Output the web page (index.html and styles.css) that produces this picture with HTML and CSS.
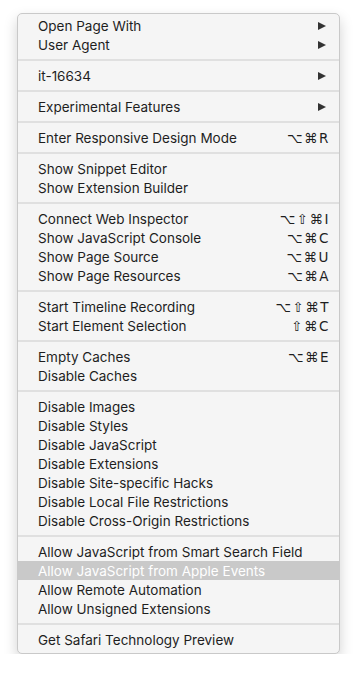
FILE: index.html
```html
<!DOCTYPE html>
<html>
<head>
<meta charset="utf-8">
<link rel="stylesheet" href="styles.css">
</head>
<body>
<div class="menu">
  <div class="group">
    <div class="item"><span>Open Page With</span><span class="arrow"></span></div>
    <div class="item"><span>User Agent</span><span class="arrow"></span></div>
  </div>
  <div class="sep"></div>
  <div class="group">
    <div class="item"><span>it-16634</span><span class="arrow"></span></div>
  </div>
  <div class="sep"></div>
  <div class="group">
    <div class="item"><span>Experimental Features</span><span class="arrow"></span></div>
  </div>
  <div class="sep"></div>
  <div class="group">
    <div class="item"><span>Enter Responsive Design Mode</span><span class="key">⌥⌘R</span></div>
  </div>
  <div class="sep"></div>
  <div class="group">
    <div class="item"><span>Show Snippet Editor</span></div>
    <div class="item"><span>Show Extension Builder</span></div>
  </div>
  <div class="sep"></div>
  <div class="group">
    <div class="item"><span>Connect Web Inspector</span><span class="key">⌥⇧⌘I</span></div>
    <div class="item"><span>Show JavaScript Console</span><span class="key">⌥⌘C</span></div>
    <div class="item"><span>Show Page Source</span><span class="key">⌥⌘U</span></div>
    <div class="item"><span>Show Page Resources</span><span class="key">⌥⌘A</span></div>
  </div>
  <div class="sep"></div>
  <div class="group">
    <div class="item"><span>Start Timeline Recording</span><span class="key">⌥⇧⌘T</span></div>
    <div class="item"><span>Start Element Selection</span><span class="key">⇧⌘C</span></div>
  </div>
  <div class="sep"></div>
  <div class="group">
    <div class="item"><span>Empty Caches</span><span class="key">⌥⌘E</span></div>
    <div class="item"><span>Disable Caches</span></div>
  </div>
  <div class="sep"></div>
  <div class="group">
    <div class="item"><span>Disable Images</span></div>
    <div class="item"><span>Disable Styles</span></div>
    <div class="item"><span>Disable JavaScript</span></div>
    <div class="item"><span>Disable Extensions</span></div>
    <div class="item"><span>Disable Site-specific Hacks</span></div>
    <div class="item"><span>Disable Local File Restrictions</span></div>
    <div class="item"><span>Disable Cross-Origin Restrictions</span></div>
  </div>
  <div class="sep"></div>
  <div class="group">
    <div class="item"><span>Allow JavaScript from Smart Search Field</span></div>
    <div class="item selected"><span>Allow JavaScript from Apple Events</span></div>
    <div class="item"><span>Allow Remote Automation</span></div>
    <div class="item"><span>Allow Unsigned Extensions</span></div>
  </div>
  <div class="sep"></div>
  <div class="group">
    <div class="item"><span>Get Safari Technology Preview</span></div>
  </div>
</div>
</body>
</html>
```
FILE: styles.css
```css
html, body {
  margin: 0;
  padding: 0;
  background: #ffffff;
}
body {
  padding: 13px 0 0 17px;
}
.menu {
  width: 321px;
  background: #f5f5f5;
  border: 1px solid #c9c9c9;
  border-radius: 5px;
  padding: 2px 0 4px;
  box-shadow: 0 6px 14px rgba(0, 0, 0, 0.18);
  font-family: Inter, "Liberation Sans", sans-serif;
  font-size: 13.5px;
  color: #1e1e1e;
}
.item {
  height: 19px;
  display: flex;
  align-items: center;
  justify-content: space-between;
  padding: 0 10px 0 20px;
}
.item.selected {
  background: #c9c9c9;
  color: #ffffff;
}
.sep {
  height: 2px;
  background: #e0e0e0;
  margin: 5px 0;
}
.arrow {
  width: 0;
  height: 0;
  border-top: 4.5px solid transparent;
  border-bottom: 4.5px solid transparent;
  border-left: 8px solid #333333;
  margin-right: 3px;
}
.key {
  font-family: "DejaVu Sans", sans-serif;
  font-size: 13.5px;
  letter-spacing: 1.5px;
  margin-right: -1px;
}
```
